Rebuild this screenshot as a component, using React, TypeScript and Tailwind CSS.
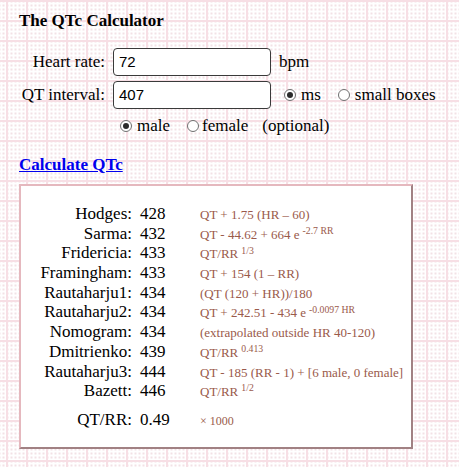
import type { ReactNode } from 'react';

type Row = { name: string; value: string; formula: ReactNode };

const ROWS: Row[] = [
  { name: 'Hodges', value: '428', formula: <>QT + 1.75 (HR – 60)</> },
  {
    name: 'Sarma',
    value: '432',
    formula: (
      <>
        QT - 44.62 + 664 e<sup className="ml-[3px]">-2.7 RR</sup>
      </>
    ),
  },
  {
    name: 'Fridericia',
    value: '433',
    formula: (
      <>
        QT/RR<sup className="ml-[3px]">1/3</sup>
      </>
    ),
  },
  { name: 'Framingham', value: '433', formula: <>QT + 154 (1 – RR)</> },
  { name: 'Rautaharju1', value: '434', formula: <>(QT (120 + HR))/180</> },
  {
    name: 'Rautaharju2',
    value: '434',
    formula: (
      <>
        QT + 242.51 - 434 e<sup className="ml-[3px]">-0.0097 HR</sup>
      </>
    ),
  },
  { name: 'Nomogram', value: '434', formula: <>(extrapolated outside HR 40-120)</> },
  {
    name: 'Dmitrienko',
    value: '439',
    formula: (
      <>
        QT/RR<sup className="ml-[3px]">0.413</sup>
      </>
    ),
  },
  { name: 'Rautaharju3', value: '444', formula: <>QT - 185 (RR - 1) + [6 male, 0 female]</> },
  {
    name: 'Bazett',
    value: '446',
    formula: (
      <>
        QT/RR<sup className="ml-[3px]">1/2</sup>
      </>
    ),
  },
];

function Radio({ checked }: { checked?: boolean }) {
  return (
    <span className="grid h-[12px] w-[12px] shrink-0 place-items-center rounded-full border border-[#6f6f6f] bg-white">
      {checked && <span className="h-[6px] w-[6px] rounded-full bg-[#2b2b2b]" />}
    </span>
  );
}

function TextBox({ value }: { value: string }) {
  return (
    <div className="flex h-[28px] w-[158px] items-center rounded-[4px] border border-[#3a3a3a] bg-white pl-[5px] font-['Liberation_Sans',Arial,sans-serif] text-[15px] text-black">
      {value}
    </div>
  );
}

function ResultRow({ name, value, formula, formulaSize = 'text-[13px]' }: Row & { formulaSize?: string }) {
  return (
    <div className="flex h-[19.7px] items-baseline leading-[19.7px]">
      <span className="w-[111px] shrink-0 text-right">{name}:</span>
      <span className="w-[68px] shrink-0 pl-[8px]">{value}</span>
      <span className={`whitespace-nowrap text-[#9a5a4b] ${formulaSize}`}>{formula}</span>
    </div>
  );
}

export default function App() {
  return (
    <div className="min-h-screen bg-white bg-[linear-gradient(to_right,#f7dfe5_2px,transparent_2px),linear-gradient(to_bottom,#f7dfe5_2px,transparent_2px),radial-gradient(circle,#e4c2ca_0.5px,transparent_0.9px)] [background-size:20px_20px,20px_20px,4px_4px] [background-position:6px_0px,0px_0px,5.5px_-0.5px] pl-[19px] pt-[11px] font-['Liberation_Serif','Times_New_Roman',serif] text-[17px] text-black">
      <h1 className="text-[17px] font-bold leading-[20px]">The QTc Calculator</h1>

      <div className="mt-[17px] flex items-center">
        <span className="w-[86px] text-right leading-[20px]">Heart rate:</span>
        <div className="ml-[8px]">
          <TextBox value="72" />
        </div>
        <span className="ml-[8px] leading-[20px]">bpm</span>
      </div>

      <div className="mt-[5px] flex items-center">
        <span className="w-[86px] text-right leading-[20px]">QT interval:</span>
        <div className="ml-[8px]">
          <TextBox value="407" />
        </div>
        <span className="ml-[13px] flex items-center gap-[5px] leading-[20px]">
          <Radio checked />
          ms
        </span>
        <span className="ml-[17px] flex items-center gap-[5px] leading-[20px]">
          <Radio />
          small boxes
        </span>
      </div>

      <div className="mt-[7px] flex items-center pl-[101px] leading-[20px]">
        <span className="flex items-center gap-[5px]">
          <Radio checked />
          male
        </span>
        <span className="ml-[17px] flex items-center gap-[3px]">
          <Radio />
          female
        </span>
        <span className="ml-[14px]">(optional)</span>
      </div>

      <a
        href="#"
        className="mt-[19px] block w-fit font-bold leading-[20px] text-[#0000ee] underline"
      >
        Calculate QTc
      </a>

      <div className="mt-[9px] w-[394px] border-2 border-t-[#e5b8be] border-l-[#e5b8be] border-r-[#a18183] border-b-[#a18183] bg-white pb-[17px] pt-[18px]">
        {ROWS.map((row) => (
          <ResultRow key={row.name} {...row} />
        ))}
        <div className="mt-[9px]">
          <ResultRow name="QT/RR" value="0.49" formula={<>× 1000</>} formulaSize="text-[12px]" />
        </div>
      </div>
    </div>
  );
}
